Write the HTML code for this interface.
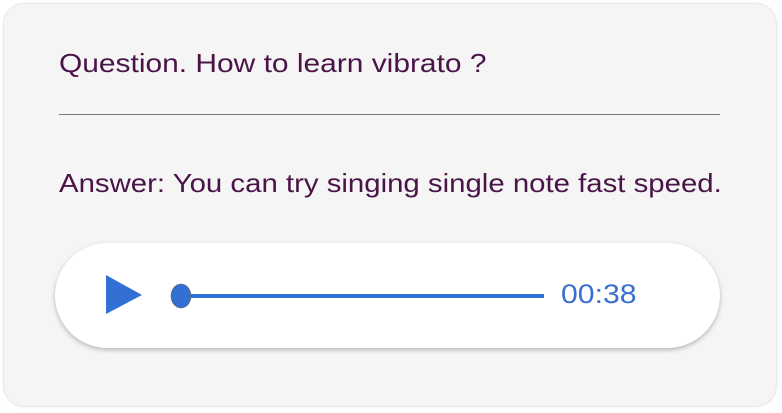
<!DOCTYPE html>
<html><head><style>
html,body{margin:0;padding:0;width:782px;height:413px;background:#fff;overflow:hidden}
.card{position:absolute;left:4px;top:4px;width:772px;height:402px;background:#f5f5f5;border-radius:20px;box-shadow:0 0 2px rgba(0,0,0,.25)}
.t{position:absolute;left:59px;font-family:"Liberation Sans",sans-serif;color:#4a1448;font-size:26px;white-space:nowrap}
.hr{position:absolute;left:59px;top:114px;width:661px;height:1px;background:#777}
.player{position:absolute;left:55px;top:243px;width:665px;height:105px;background:#fff;border-radius:53px;box-shadow:0 2px 5px rgba(0,0,0,.25)}
.time{position:absolute;left:561px;top:279px;font-family:"Liberation Sans",sans-serif;font-size:27px;color:#3a6fd1;white-space:nowrap}
</style></head><body>
<div class="card"></div>
<div class="t" id="q" style="top:48px">Question. How to learn vibrato ?</div>
<div class="hr"></div>
<div class="t" id="a" style="top:168px">Answer: You can try singing single note fast speed.</div>
<div class="player"></div>
<svg style="position:absolute;left:0;top:0" width="782" height="413">
<polygon points="106,275 142,295 106,314" fill="#3370d4"/>
<line x1="181" y1="296" x2="544" y2="296" stroke="#3370d4" stroke-width="4"/>
<ellipse cx="181" cy="296" rx="10" ry="12" fill="#3370d4" stroke="#666" stroke-width="0.6"/>
</svg>
<div class="time" id="tm">00:38</div>
<script>
function fit(id,w){var e=document.getElementById(id);var s=w/e.offsetWidth;e.style.transform='scaleX('+s+')';e.style.transformOrigin='0 0';}
fit('q',427);fit('a',663);fit('tm',76);
</script>
</body></html>
